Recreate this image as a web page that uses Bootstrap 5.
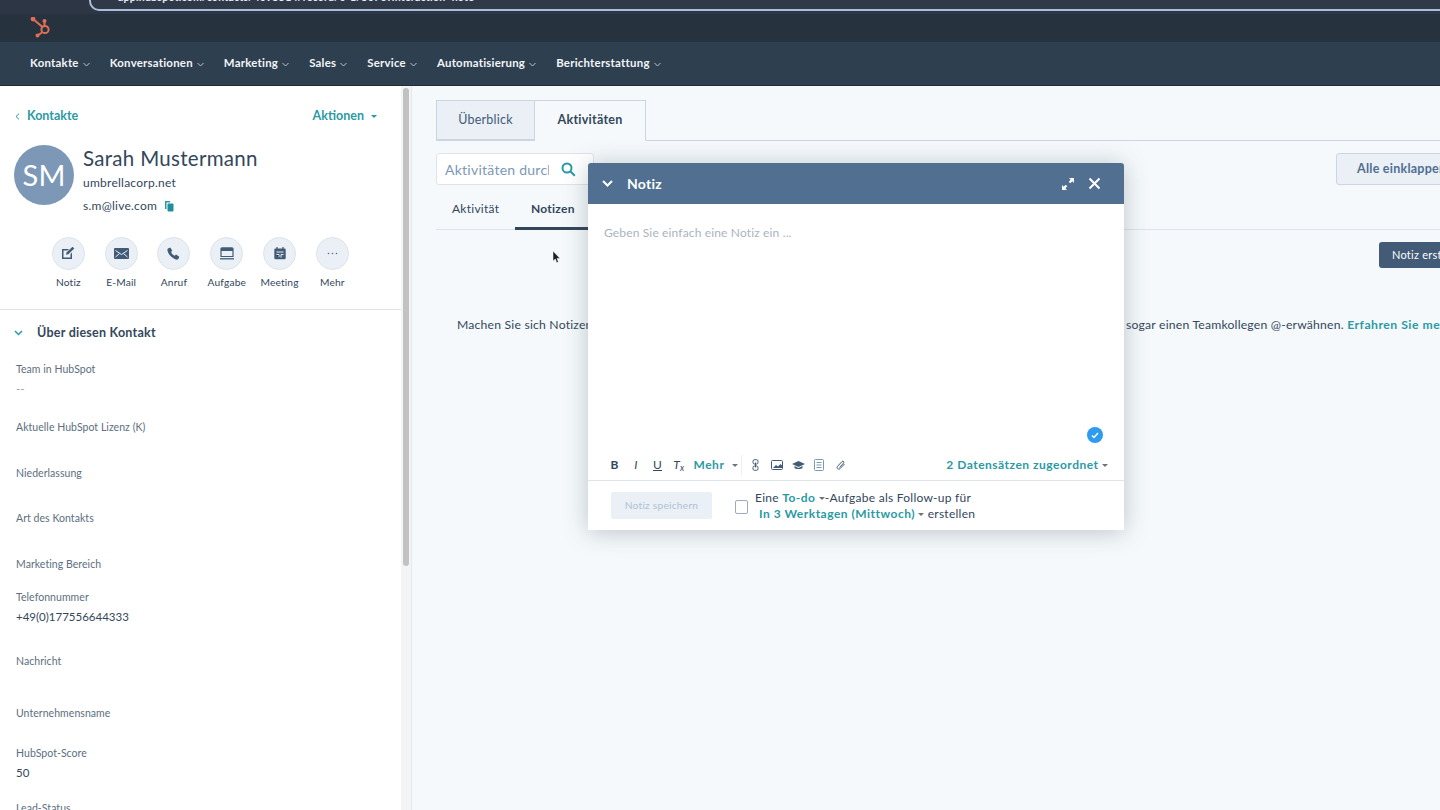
<!DOCTYPE html>
<html lang="de">
<head>
<meta charset="UTF-8" />
<meta name="viewport" content="width=device-width, initial-scale=1" />
<title>Sarah Mustermann - Kontakt</title>
<link href="https://cdn.jsdelivr.net/npm/bootstrap@5.3.0/dist/css/bootstrap.min.css" rel="stylesheet" />
<style>
html, body { height: 810px; overflow: hidden; }
body { font-family: "Lato", "Noto Sans", sans-serif; color: #33475b; background: #f5f9fb; font-size: 13px; letter-spacing: .25px; }
a { text-decoration: none; }
.teal { color: #2a9aa3; font-weight: 700; letter-spacing: .5px; }
.caret-down { display: inline-block; width: 0; height: 0; border-left: 3px solid transparent; border-right: 3px solid transparent; border-top: 3px solid currentColor; vertical-align: middle; }

.browser-strip { height: 14px; background: #2c3644; padding-left: 89px; overflow: hidden; }
.url-pill { height: 11px; border: 2px solid #a9bcd8; border-top: 0; border-right: 0; border-radius: 0 0 0 10px; background: #2f3947; padding-left: 27px; overflow: hidden; }
.url-text { margin-top: -9px; line-height: 12px; font-size: 10.5px; font-weight: 700; color: #e8eef5; white-space: nowrap; }
.logo-bar { height: 28px; background: #27323f; padding-left: 30px; }
.nav-bar { height: 44px; background: #2e3f50; padding-left: 30px; gap: 20px; border-bottom: 1px solid #222c38; }
.nav-bar a { color: #f2f5f8; font-size: 11.4px; font-weight: 700; line-height: 42px; }
.nav-bar svg { margin-left: 4px; }

.page-area { height: 724px; }
.side-col { width: 401px; background: #fff; flex: none; overflow: hidden; }
.side-scroll { width: 11px; flex: none; background: #f3f4f5; border-right: 1px solid #e4e9ee; padding: 2px 2px 0; }
.side-thumb { height: 478px; background: #c2c2c2; border-radius: 4px; }
.main-col { flex: 1; min-width: 0; overflow: hidden; padding: 14px 0 0 24px; }
.main-inner { width: 1030px; }

.back-row { padding: 21px 24px 0 15px; font-size: 12.5px; letter-spacing: 0; }
.back-row a { color: #2a9aa3; font-weight: 700; }
.avatar { width: 60px; height: 60px; border-radius: 50%; background: #7c98b6; color: #fff; font-size: 29px; flex: none; }
.person { margin: 19px 0 0 14px; gap: 9px; }
.person-name { font-size: 20.5px; line-height: 26px; letter-spacing: .3px; font-weight: 400; }
.person-line { font-size: 12px; line-height: 23px; }
.action-row { padding: 20px 0 0 42px; }
.action-item { width: 52.8px; font-size: 10.2px; letter-spacing: .15px; }
.action-circle { width: 33px; height: 33px; border-radius: 50%; background: #eaf0f6; border: 1px solid #dbe3ea; margin-bottom: 5px; }
.about-head { border-top: 1px solid #dfe3eb; margin-top: 19px; padding: 14px 0 0 14px; font-weight: 700; font-size: 12.5px; gap: 14px; }
.prop-list { margin: 19px 0 0 16px; font-size: 10.5px; letter-spacing: .05px; }
.prop-label { line-height: 14px; color: #5c6e80; }
.prop-val { font-size: 11.5px; line-height: 20px; margin-top: 3px; letter-spacing: 0; }
.prop-empty { color: #99a5b1; }
.h-58 { height: 58px; } .h-46 { height: 46px; } .h-45 { height: 45px; } .h-33 { height: 33px; }
.h-64 { height: 64px; } .h-52 { height: 52px; } .h-40 { height: 40px; } .h-55 { height: 55px; }

.tab-row { border-bottom: 1px solid #cbd6e2; height: 41px; }
.tab-item { height: 41px; border: 1px solid #cbd6e2; font-size: 12.5px; }
.tab-off { width: 99px; background: #eaf0f6; color: #425b76; height: 40px; }
.tab-on { width: 111px; background: #f5f9fb; border-left: 0; border-bottom-color: #f5f9fb; font-weight: 700; }
.tools-row { margin-top: 12px; height: 32px; }
.search-box { width: 158px; height: 32px; background: #fff; border: 1px solid #dfe3eb; border-radius: 3px; padding: 0 17px 0 8px; font-size: 14px; color: #7c98b6; }
.search-text { width: 104px; overflow: hidden; white-space: nowrap; }
.collapse-btn { width: 130px; margin-left: auto; height: 32px; background: #eaf0f6; border: 1px solid #cbd6e2; border-radius: 3px; font-weight: 700; color: #506e91; font-size: 12.5px; padding-left: 20px; white-space: nowrap; overflow: hidden; }
.sub-tabs { height: 45px; border-bottom: 1px solid #dfe3eb; }
.sub-tab { height: 45px; padding: 15px 16px 0; font-size: 12px; }
.sub-first { width: 79px; }
.sub-on { font-weight: 700; border-bottom: 3px solid #33475b; width: 90px; }
.note-btn-row { justify-content: flex-end; margin-top: 12px; }
.note-btn { width: 87px; height: 26px; background: #425b76; color: #fff; font-size: 11px; border-radius: 3px; padding: 5px 0 0 13px; white-space: nowrap; overflow: hidden; }
.hint-line { margin: 48px 0 0 21px; font-size: 12.2px; letter-spacing: .2px; white-space: nowrap; }
.hint-left { width: 669px; overflow: hidden; }

.note-panel { position: absolute; left: 588px; top: 163px; width: 536px; height: 367px; background: #fff; border-radius: 3px 3px 0 0; box-shadow: 0 2px 24px rgba(45, 62, 80, .28); }
.note-head { height: 41px; background: #516f90; color: #fff; border-radius: 3px 3px 0 0; padding: 0 23px 0 14px; font-size: 14px; font-weight: 700; gap: 14px; }
.note-body { height: 243px; padding: 20px 16px 0; color: #a9b3be; font-size: 12px; letter-spacing: .15px; position: relative; }
.check-dot { position: absolute; right: 21px; bottom: 4px; width: 16px; height: 16px; border-radius: 50%; background: #2e9bf0; }
.note-tools { height: 34px; padding: 2px 16px 0 16px; border-bottom: 1px solid #dfe3eb; font-size: 12px; }
.note-tools .tool-ico { width: 21.4px; text-align: center; }
.tool-mehr { margin-left: 4px; }
.tool-sep { border-right: 1px solid #eaf0f6; height: 20px; margin: 0 3px; }
.note-foot { padding: 11px 0 0 23px; font-size: 12px; }
.save-btn { width: 101px; height: 27px; background: #eaf0f6; color: #b0c1d4; border-radius: 2px; font-size: 10.2px; }
.todo-check { width: 13px; height: 14px; border: 1px solid #99acc2; border-radius: 2px; margin: 0 7px 0 23px; background: #fff; }
.todo-text { line-height: 16px; margin-top: -2px; }
.mouse-arrow { position: absolute; left: 552px; top: 250px; }
</style>
</head>
<body>

<div class="browser-strip"><div class="url-pill"><div class="url-text">app.hubspot.com/contacts/4095514/record/0-1/5076?interaction=note</div></div></div>
<div class="logo-bar d-flex align-items-center">
  <svg width="22" height="22" viewBox="0 0 22 22" fill="none" stroke="#df6f56" stroke-width="2"><circle cx="15" cy="12.500" r="3.600"/><path d="M3 2l9.500 8M14.500 4v5M12 15.500L7.500 18.500"/><circle cx="3" cy="2" r="1.400" fill="#df6f56"/><circle cx="14.500" cy="4" r="1" fill="#df6f56"/><circle cx="7.500" cy="18.500" r="1" fill="#df6f56"/></svg>
</div>
<nav class="nav-bar d-flex align-items-start">
  <a href="#">Kontakte<svg width="7" height="5" viewBox="0 0 7 5" fill="none" stroke="#b7c4d2"><path d="M.5 1l3 3 3-3"/></svg></a>
  <a href="#">Konversationen<svg width="7" height="5" viewBox="0 0 7 5" fill="none" stroke="#b7c4d2"><path d="M.5 1l3 3 3-3"/></svg></a>
  <a href="#">Marketing<svg width="7" height="5" viewBox="0 0 7 5" fill="none" stroke="#b7c4d2"><path d="M.5 1l3 3 3-3"/></svg></a>
  <a href="#">Sales<svg width="7" height="5" viewBox="0 0 7 5" fill="none" stroke="#b7c4d2"><path d="M.5 1l3 3 3-3"/></svg></a>
  <a href="#">Service<svg width="7" height="5" viewBox="0 0 7 5" fill="none" stroke="#b7c4d2"><path d="M.5 1l3 3 3-3"/></svg></a>
  <a href="#">Automatisierung<svg width="7" height="5" viewBox="0 0 7 5" fill="none" stroke="#b7c4d2"><path d="M.5 1l3 3 3-3"/></svg></a>
  <a href="#">Berichterstattung<svg width="7" height="5" viewBox="0 0 7 5" fill="none" stroke="#b7c4d2"><path d="M.5 1l3 3 3-3"/></svg></a>
</nav>

<div class="page-area d-flex">
  <aside class="side-col">
    <div class="back-row d-flex justify-content-between align-items-center">
      <a href="#"><svg width="5" height="7" viewBox="0 0 5 7" fill="none" stroke="#2a9aa3" class="me-1"><path d="M4 .7L1 3.500l3 2.800"/></svg> Kontakte</a>
      <a href="#">Aktionen <span class="caret-down ms-1"></span></a>
    </div>
    <div class="person d-flex">
      <div class="avatar d-flex align-items-center justify-content-center">SM</div>
      <div>
        <div class="person-name">Sarah Mustermann</div>
        <div class="person-line">umbrellacorp.net</div>
        <div class="person-line">s.m@live.com
          <svg class="ms-1" width="10" height="11" viewBox="0 0 10 11"><path d="M1 0h5v1.500H2.500V8H1z" fill="#2a9aa3"/><rect x="3.500" y="2.500" width="6" height="8" rx="1" fill="#1f8f9a"/></svg>
        </div>
      </div>
    </div>
    <div class="action-row d-flex text-center">
      <div class="action-item d-flex flex-column align-items-center">
        <div class="action-circle d-flex align-items-center justify-content-center">
          <svg width="14" height="14" viewBox="0 0 14 14"><path d="M1 3h7L6.500 4.500H2.500v7h7V8L11 6.500V13H1z" fill="#425b76"/><path d="M5.500 6.500L11.500.7l1.800 1.800-6 5.800-2.200.4z" fill="#425b76"/></svg>
        </div>Notiz
      </div>
      <div class="action-item d-flex flex-column align-items-center">
        <div class="action-circle d-flex align-items-center justify-content-center">
          <svg width="15" height="11" viewBox="0 0 15 11"><rect width="15" height="11" rx="1" fill="#425b76"/><path d="M1.500 2.500l6 4 6-4M1.500 9l4-3.500M13.500 9l-4-3.500" fill="none" stroke="#eaf0f6"/></svg>
        </div>E-Mail
      </div>
      <div class="action-item d-flex flex-column align-items-center">
        <div class="action-circle d-flex align-items-center justify-content-center">
          <svg width="13" height="13" viewBox="0 0 13 13"><path d="M1 1.500L3.300.5l2 3.300-1.300 1.200c.6 1.500 2 3 3.700 3.800l1.300-1.300 3.300 2.200-1 2.300c-.4.700-1.500.8-2.500.5C5 11.200 1.800 8 .6 4 .3 3 .4 2 1 1.500z" fill="#425b76"/></svg>
        </div>Anruf
      </div>
      <div class="action-item d-flex flex-column align-items-center">
        <div class="action-circle d-flex align-items-center justify-content-center">
          <svg width="14" height="13" viewBox="0 0 14 13" fill="none"><path d="M2 .8h10a1 1 0 0 1 1 1V9.500H1V1.800a1 1 0 0 1 1-1z" stroke="#425b76" stroke-width="1.200"/><rect x="1" y="1" width="12" height="3" fill="#425b76"/><path d="M0 11.800h14" stroke="#425b76" stroke-width="1.300"/></svg>
        </div>Aufgabe
      </div>
      <div class="action-item d-flex flex-column align-items-center">
        <div class="action-circle d-flex align-items-center justify-content-center">
          <svg width="12" height="13" viewBox="0 0 12 13"><path d="M1.500 1.500h9a1.200 1.200 0 0 1 1.200 1.200V11a1.200 1.200 0 0 1-1.200 1.200h-9A1.200 1.200 0 0 1 .3 11V2.700a1.200 1.200 0 0 1 1.200-1.200z" fill="#425b76"/><path d="M3 0v2.500M9 0v2.500" stroke="#425b76" stroke-width="1.300"/><path d="M2.500 5h7M2.500 7.500h2.500v2.500M7 7.500h2.500M7 7.500v3" stroke="#eaf0f6"/></svg>
        </div>Meeting
      </div>
      <div class="action-item d-flex flex-column align-items-center">
        <div class="action-circle d-flex align-items-center justify-content-center">
          <svg width="11" height="3" viewBox="0 0 11 3" fill="#516f90"><circle cx="1.500" cy="1.500" r=".8"/><circle cx="5.500" cy="1.500" r=".8"/><circle cx="9.500" cy="1.500" r=".8"/></svg>
        </div>Mehr
      </div>
    </div>
    <div class="about-head d-flex align-items-center">
      <svg width="9" height="6" viewBox="0 0 9 6" fill="none" stroke="#2a9aa3" stroke-width="1.500"><path d="M1 1l3.500 3.500L8 1"/></svg>
      Über diesen Kontakt
    </div>
    <div class="prop-list">
      <div class="h-58"><div class="prop-label">Team in HubSpot</div><div class="prop-val prop-empty">--</div></div>
      <div class="h-46"><div class="prop-label">Aktuelle HubSpot Lizenz (K)</div></div>
      <div class="h-45"><div class="prop-label">Niederlassung</div></div>
      <div class="h-46"><div class="prop-label">Art des Kontakts</div></div>
      <div class="h-33"><div class="prop-label">Marketing Bereich</div></div>
      <div class="h-64"><div class="prop-label">Telefonnummer</div><div class="prop-val">+49(0)177556644333</div></div>
      <div class="h-52"><div class="prop-label">Nachricht</div></div>
      <div class="h-40"><div class="prop-label">Unternehmensname</div></div>
      <div class="h-55"><div class="prop-label">HubSpot-Score</div><div class="prop-val">50</div></div>
      <div><div class="prop-label">Lead-Status</div></div>
    </div>
  </aside>
  <div class="side-scroll"><div class="side-thumb"></div></div>

  <main class="main-col">
    <div class="main-inner">
      <div class="tab-row d-flex">
        <div class="tab-item tab-off d-flex align-items-center justify-content-center">Überblick</div>
        <div class="tab-item tab-on d-flex align-items-center justify-content-center">Aktivitäten</div>
      </div>
      <div class="tools-row d-flex">
        <div class="search-box d-flex align-items-center justify-content-between">
          <span class="search-text">Aktivitäten durchsuchen</span>
          <svg width="15" height="15" viewBox="0 0 15 15" fill="none" stroke="#2a9aa3" stroke-width="2"><circle cx="6" cy="6" r="4.500"/><path d="M9.500 9.500l4.300 4.300"/></svg>
        </div>
        <div class="collapse-btn d-flex align-items-center">Alle einklappen</div>
      </div>
      <div class="sub-tabs d-flex">
        <div class="sub-tab sub-first">Aktivität</div>
        <div class="sub-tab sub-on">Notizen</div>
      </div>
      <div class="note-btn-row d-flex"><div class="note-btn">Notiz erstellen</div></div>
      <div class="hint-line d-flex">
        <div class="hint-left">Machen Sie sich Notizen zu Ihren Interaktionen und Gesprächen, fügen Sie Anhänge hinzu oder</div>
        <div>sogar einen Teamkollegen @-erwähnen. <a href="#" class="teal">Erfahren Sie mehr</a></div>
      </div>
    </div>
  </main>
</div>

<section class="note-panel">
  <div class="note-head d-flex align-items-center">
    <svg width="11" height="7" viewBox="0 0 11 7" fill="none" stroke="#fff" stroke-width="2"><path d="M1 1l4.500 4.500L10 1"/></svg>
    <span>Notiz</span>
    <svg class="ms-auto" width="12" height="12" viewBox="0 0 12 12" fill="#fff"><path d="M7 0h5v5l-1.700-1.700L8.300 5.300 6.700 3.700l2-2zM5 12H0V7l1.700 1.700 2-2 1.600 1.600-2 2z"/></svg>
    <svg class="ms-0" width="13" height="13" viewBox="0 0 13 13" fill="none" stroke="#fff" stroke-width="2"><path d="M1.500 1.500l10 10M11.500 1.500l-10 10"/></svg>
  </div>
  <div class="note-body">
    Geben Sie einfach eine Notiz ein ...
    <div class="check-dot d-flex align-items-center justify-content-center">
      <svg width="8" height="7" viewBox="0 0 8 7" fill="none" stroke="#fff" stroke-width="1.500"><path d="M1 3.500l2 2L7 1"/></svg>
    </div>
  </div>
  <div class="note-tools d-flex align-items-center">
    <span class="tool-ico fw-bold">B</span>
    <span class="tool-ico fst-italic">I</span>
    <span class="tool-ico text-decoration-underline">U</span>
    <span class="tool-ico fst-italic">T<sub>x</sub></span>
    <span class="teal tool-mehr">Mehr <span class="caret-down ms-1 text-secondary"></span></span>
    <span class="tool-sep"></span>
    <span class="tool-ico"><svg width="7" height="12" viewBox="0 0 7 12" fill="none" stroke="#425b76"><rect x="1" y=".7" width="5" height="4.300" rx="1.500"/><rect x="1" y="7" width="5" height="4.300" rx="1.500"/><path d="M3.500 3.500v5"/></svg></span>
    <span class="tool-ico"><svg width="12" height="10" viewBox="0 0 12 10"><rect x=".5" y=".5" width="11" height="9" rx="1" fill="#fff" stroke="#425b76"/><path d="M2 8l3-3 2 1.500L9.500 4 11 5.500V8z" fill="#425b76"/></svg></span>
    <span class="tool-ico"><svg width="13" height="10" viewBox="0 0 13 10" fill="#425b76"><path d="M6.500 1L13 4 6.500 7 0 4z"/><path d="M2.500 6v2c1 1.300 7 1.300 8 0V6L6.500 8z"/></svg></span>
    <span class="tool-ico"><svg width="10" height="12" viewBox="0 0 10 12" fill="none" stroke="#7c98b6"><rect x=".5" y=".5" width="9" height="11" rx="1"/><path d="M2.500 3.500h5M2.500 6h5M2.500 8.500h5"/></svg></span>
    <span class="tool-ico"><svg width="11" height="12" viewBox="0 0 11 12" fill="none" stroke="#425b76"><path d="M9.500 5L5 9.700c-1.500 1.500-4 -.5-2.500-2.300L7 2.500c1-1 2.600.4 1.600 1.500L4.500 8.500"/></svg></span>
    <span class="teal ms-auto">2 Datensätzen zugeordnet <span class="caret-down text-secondary"></span></span>
  </div>
  <div class="note-foot d-flex">
    <div class="save-btn d-flex align-items-center justify-content-center">Notiz speichern</div>
    <div class="todo-check mt-2"></div>
    <div class="todo-text">
      <div>Eine <span class="teal">To-do</span> <span class="caret-down text-secondary"></span>-Aufgabe als Follow-up für</div>
      <div class="ps-1"><span class="teal">In 3 Werktagen (Mittwoch)</span> <span class="caret-down text-secondary"></span> erstellen</div>
    </div>
  </div>
</section>

<svg class="mouse-arrow" width="9" height="14" viewBox="0 0 9 14"><path d="M1 1v10l2.300-2 1.500 3.800 1.600-.7L5 8.500h3z" fill="#1c1f24" stroke="#fff" stroke-width=".5"/></svg>

<script src="https://cdn.jsdelivr.net/npm/bootstrap@5.3.0/dist/js/bootstrap.bundle.min.js"></script>
</body>
</html>
